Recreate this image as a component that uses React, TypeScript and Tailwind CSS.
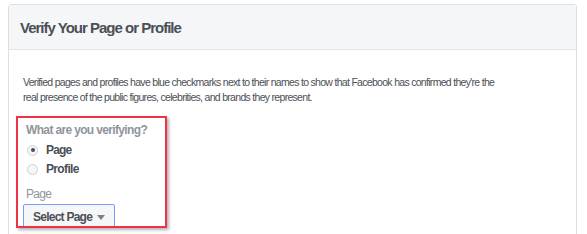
export default function App() {
  return (
    <div className="w-[587px] h-[234px] bg-white overflow-hidden pt-[4px] pl-[8px] font-['Liberation_Sans',Arial,sans-serif]">
      <div className="w-[569px] h-[260px] border border-[#dddfe2] rounded-t-[3px] bg-white">
        {/* header */}
        <div className="h-[45px] bg-[#f5f6f7] border-b border-[#e5e5e5] flex items-center pl-[11px]">
          <h1 className="text-[15px] font-bold text-[#4b4f56] leading-none tracking-[-1px]">Verify Your Page or Profile</h1>
        </div>

        {/* body */}
        <div className="pt-[25px]">
          <p className="pl-[14px] w-[492px] text-[10.5px] leading-[14.5px] text-[#4b4f56] tracking-[-0.7px]">
            Verified pages and profiles have blue checkmarks next to their names to show that Facebook has confirmed they're the
            real presence of the public figures, celebrities, and brands they represent.
          </p>

          <div className="ml-[7px] mt-[12px] w-[151px] h-[112px] border-2 border-[#ee3344] overflow-hidden shadow-[2px_2px_3px_rgba(0,0,0,0.3)] pl-[8px] pt-[5px]">
            <div className="text-[12px] font-bold text-[#90949c] leading-[14px] tracking-[-0.65px]">What are you verifying?</div>

            <div className="mt-[6px] flex flex-col gap-[5px]">
              <label className="flex items-center gap-[8px] pl-[1px]">
                <span className="w-[11px] h-[11px] rounded-full border border-[#ccd0d5] bg-[#f5f6f7] flex items-center justify-center">
                  <span className="w-[4px] h-[4px] rounded-full bg-[#4b4f56]" />
                </span>
                <span className="text-[12px] font-bold text-[#4b4f56] leading-[14px] tracking-[-0.8px]">Page</span>
              </label>
              <label className="flex items-center gap-[8px] pl-[1px]">
                <span className="w-[11px] h-[11px] rounded-full border border-[#ccd0d5] bg-[#f5f6f7]" />
                <span className="text-[12px] font-bold text-[#4b4f56] leading-[14px] tracking-[-0.65px]">Profile</span>
              </label>
            </div>

            <div className="mt-[11px] text-[12px] text-[#90949c] leading-[14px] tracking-[-0.7px]">Page</div>

            <button className="mt-[3px] -ml-[3px] w-[92px] h-[26px] border border-[#7b9ef0] rounded-[2px] bg-[#f5f6f7] flex items-center pl-[9px] gap-[5px]">
              <span className="text-[12px] font-bold text-[#4b4f56] leading-none tracking-[-0.75px]">Select Page</span>
              <svg width="8" height="5" viewBox="0 0 8 5">
                <path d="M0 0h8L4 5z" fill="#7f7f7f" />
              </svg>
            </button>
          </div>
        </div>
      </div>
    </div>
  );
}
